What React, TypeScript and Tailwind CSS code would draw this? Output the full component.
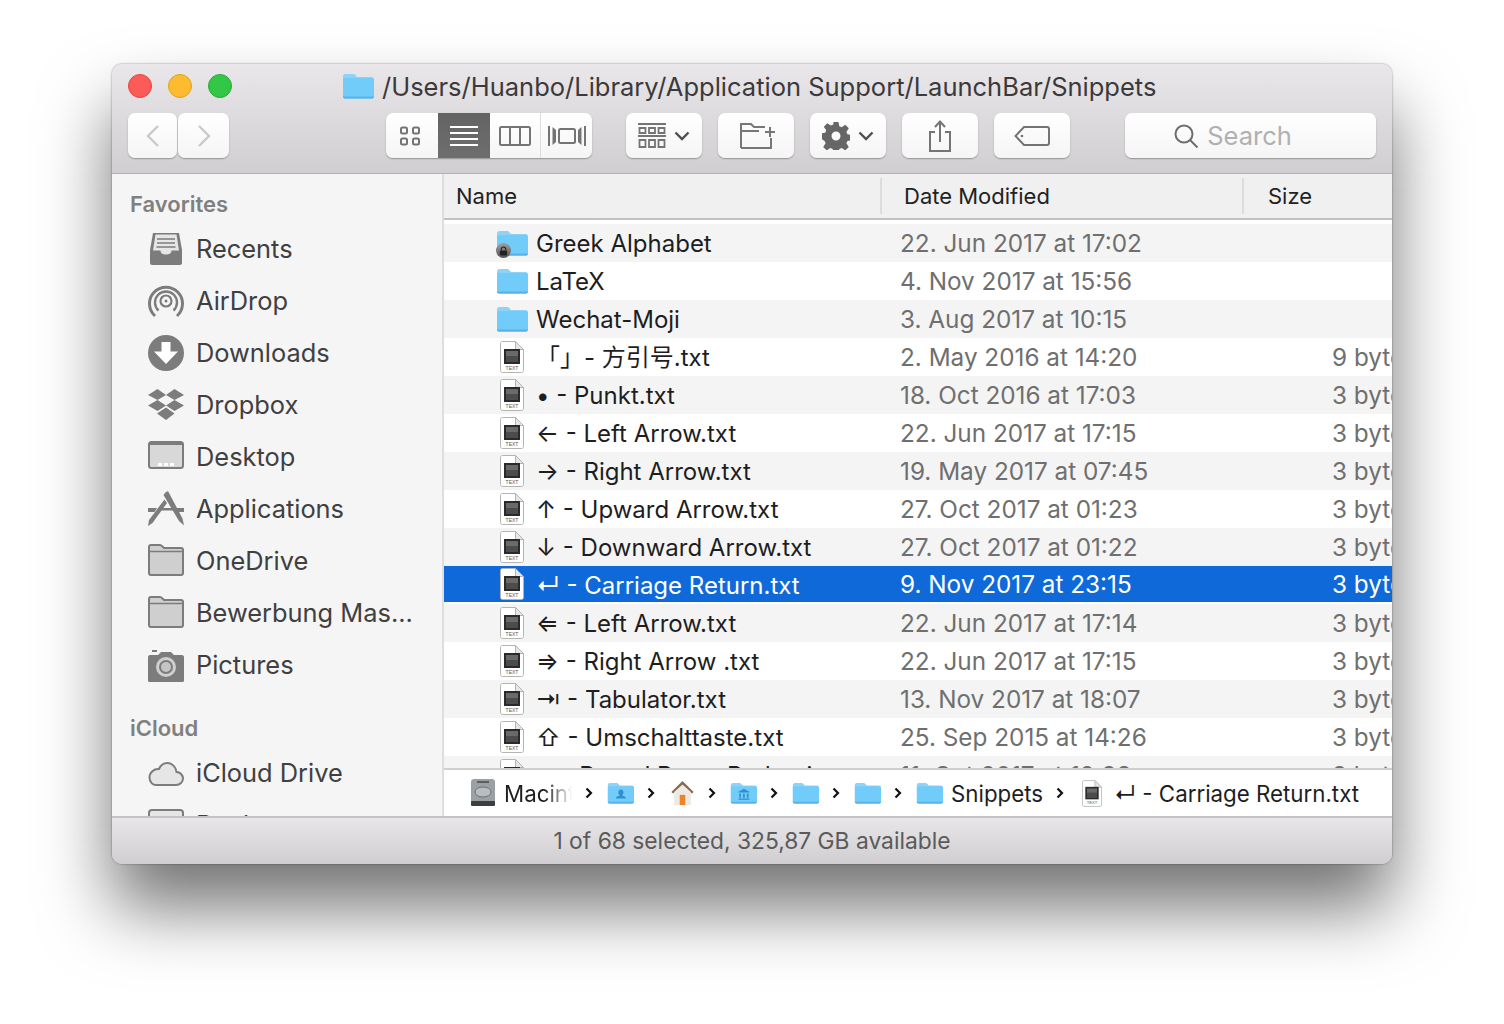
import React from 'react';

const FONT = "font-['Inter','Noto_Sans_CJK_SC',sans-serif]";

function Folder({ className = 'w-[32px] h-[26px]', glyph }: { className?: string; glyph?: 'user' | 'library' }) {
  return (
    <svg viewBox="0 0 32 26" className={className}>
      <path d="M1 3.500C1 2 2 1 3.500 1h7.500c1.200 0 1.800.5 2.600 1.400L15 4h14.500C31 4 32 5 32 6.500V23.500c0 1.200-1 2-2 2H3c-1.200 0-2-.8-2-2Z" fill="#90d2f6" />
      <path d="M1 6.500C1 5.500 2 5 3 5h26.500c1.300 0 2.500.8 2.500 2v16.500c0 1.200-1 2-2 2H3c-1.200 0-2-.8-2-2Z" fill="#72ccfa" />
      <path d="M1 23.500h31v.3c0 1-1 1.700-2 1.700H3c-1.200 0-2-.7-2-1.700Z" fill="#59b2e8" />
      {glyph === 'user' && <path d="M16.500 9a3 3 0 0 1 3 3.500c0 1.500-1 2.500-1.500 3.500 2 .8 4.500 1.500 4.500 3.500h-12c0-2 2.500-2.700 4.500-3.500-.5-1-1.500-2-1.500-3.500a3 3 0 0 1 3-3.500Z" fill="#2f8fcf" />}
      {glyph === 'library' && <path d="M16.500 8 23 11.500v1H10v-1ZM11 13.500h2v5h-2ZM15.500 13.500h2v5h-2ZM20 13.500h2v5h-2ZM10 19.500h13v1.500H10Z" fill="#2f8fcf" />}
    </svg>
  );
}

function DocIcon({ className = 'w-[24px] h-[32px]' }: { className?: string }) {
  return (
    <svg viewBox="0 0 24 32" className={className}>
      <path d="M.5 2.500C.5 1.400 1.400.5 2.500.5h13l8 8v21c0 1.100-.9 2-2 2h-19c-1.100 0-2-.9-2-2Z" fill="#fff" stroke="#b4b4b4" />
      <path d="M15.500.5v8h8Z" fill="#e6e6e6" stroke="#b4b4b4" strokeLinejoin="round" />
      <rect x="4" y="8" width="16" height="15" fill="#2a2a2a" />
      <rect x="6" y="10" width="12" height="11" fill="#6a6a6a" />
      <rect x="6" y="15" width="12" height="6" fill="#4c4c4c" />
      <text x="12" y="29" textAnchor="middle" fontSize="5" fontFamily="Liberation Sans" fill="#555">TEXT</text>
    </svg>
  );
}

function Chevron({ left }: { left?: boolean }) {
  return (
    <svg viewBox="0 0 16 24" className="w-[16px] h-[24px]">
      <path d={left ? 'M13 2 3 12l10 10' : 'M3 2l10 10L3 22'} fill="none" stroke="#c9c9c9" strokeWidth="2.400" />
    </svg>
  );
}

function PathChevron() {
  return (
    <svg viewBox="0 0 8 12" className="w-[8px] h-[12px] shrink-0 ml-[13px] mr-[14px]">
      <path d="M1.500 1.500 6 6l-4.500 4.500" fill="none" stroke="#111" strokeWidth="2.200" />
    </svg>
  );
}

function Btn({ className = 'w-[76px]', children }: { className?: string; children: React.ReactNode }) {
  return (
    <div className={`${className} h-[45px] flex items-center justify-center gap-[8px] rounded-[7px] bg-gradient-to-b from-white to-[#f5f5f5] shadow-[0_1px_1.500px_rgba(0,0,0,0.3)]`}>
      {children}
    </div>
  );
}

function ViewGroup() {
  return (
    <div className="flex w-[206px] h-[45px] rounded-[7px] overflow-hidden bg-gradient-to-b from-white to-[#f5f5f5] shadow-[0_1px_1.500px_rgba(0,0,0,0.3)]">
      <div className="w-[52px] flex items-center justify-center">
        <svg viewBox="0 0 22 20" className="w-[22px] h-[20px] -translate-x-[2px]" fill="none" stroke="#747474" strokeWidth="2">
          <rect x="2" y="1.500" width="6" height="6" rx="1.500" />
          <rect x="14" y="1.500" width="6" height="6" rx="1.500" />
          <rect x="2" y="12.500" width="6" height="6" rx="1.500" />
          <rect x="14" y="12.500" width="6" height="6" rx="1.500" />
        </svg>
      </div>
      <div className="w-[52px] flex items-center justify-center bg-gradient-to-b from-[#636363] to-[#6e6e6e]">
        <svg viewBox="0 0 28 20" className="w-[28px] h-[20px]" stroke="#fff" strokeWidth="2">
          <path d="M0 1h28M0 7h28M0 13h28M0 19h28" />
        </svg>
      </div>
      <div className="w-[51px] flex items-center justify-center border-r border-[#dcdcdc]">
        <svg viewBox="0 0 32 20" className="w-[32px] h-[20px]" fill="none" stroke="#747474" strokeWidth="2">
          <rect x="1" y="1" width="30" height="18" rx="1.500" />
          <path d="M11 1v18M21 1v18" />
        </svg>
      </div>
      <div className="flex-1 flex items-center justify-center">
        <svg viewBox="0 0 38 20" className="w-[38px] h-[20px]" fill="none" stroke="#747474" strokeWidth="2">
          <rect x="11" y="3" width="16" height="14" rx="1.500" />
          <path d="M1 0v20M37 0v20" />
          <path d="M4.500 1 8 4v12l-3.500 3ZM33.500 1 30 4v12l3.500 3Z" fill="#747474" stroke="none" />
        </svg>
      </div>
    </div>
  );
}

function Caret() {
  return (
    <svg viewBox="0 0 16 10" className="w-[16px] h-[10px]">
      <path d="M1.500 1.500 8 8l6.500-6.500" fill="none" stroke="#4f4f4f" strokeWidth="2.400" />
    </svg>
  );
}

function Toolbar() {
  return (
    <div className="flex items-center h-[45px] pl-[16px] mt-[5px]">
      <div className="flex w-[101px] gap-[1px]">
        <Btn className="w-[49px]"><Chevron left /></Btn>
        <Btn className="w-[51px]"><Chevron /></Btn>
      </div>
      <div className="ml-[157px]"><ViewGroup /></div>
      <div className="ml-[34px] flex gap-[16px]">
        <Btn>
          <svg viewBox="0 0 28 26" className="w-[28px] h-[26px]" fill="none" stroke="#747474" strokeWidth="1.800">
            <path d="M0 1h28M0 13h28" strokeWidth="2" />
            <path d="M1.500 5h6v5h-6zM11 5h6v5h-6zM20.500 5h6v5h-6zM1.500 17h6v7h-6zM11 17h6v7h-6zM20.500 17h6v7h-6z" />
          </svg>
          <Caret />
        </Btn>
        <Btn>
          <svg viewBox="0 0 36 26" className="w-[36px] h-[26px] ml-[4px]" fill="none" stroke="#777" strokeWidth="2">
            <path d="M1 25V1h10l3 3h11M1 8h18M31 15v10H1" />
            <path d="M25 9h10M30 4v10" />
          </svg>
        </Btn>
        <Btn>
          <svg viewBox="0 0 28 28" className="w-[28px] h-[28px]" fill="#666">
            <path fillRule="evenodd" d="M11.500 0h5l.8 4.200 2.400 1 3.600-2.400 3.500 3.500-2.400 3.600 1 2.400 4.200.8v5l-4.200.8-1 2.400 2.400 3.600-3.500 3.500-3.600-2.400-2.400 1-.8 4.200h-5l-.8-4.200-2.400-1-3.600 2.400-3.500-3.500 2.400-3.600-1-2.400L-1 16.500v-5l4.200-.8 1-2.400-2.400-3.600 3.500-3.500 3.600 2.400 2.400-1ZM14 9.500a4.500 4.500 0 1 0 0 9 4.500 4.500 0 0 0 0-9Z" />
          </svg>
          <Caret />
        </Btn>
        <Btn>
          <svg viewBox="0 0 24 32" className="w-[24px] h-[32px]" fill="none" stroke="#747474" strokeWidth="2">
            <path d="M7 12H2v19h20V12h-5" />
            <path d="M12 22V2M7 7l5-5.500L17 7" />
          </svg>
        </Btn>
        <Btn>
          <svg viewBox="0 0 36 20" className="w-[36px] h-[20px]" fill="none" stroke="#747474" strokeWidth="2">
            <path d="M10 1h23c1.100 0 2 .9 2 2v14c0 1.100-.9 2-2 2H10L1.500 10Z" />
            <circle cx="8" cy="10" r="1.300" fill="#747474" stroke="none" />
          </svg>
        </Btn>
      </div>
      <div className="ml-[55px]">
        <Btn className="w-[251px] pr-[36px]">
          <svg viewBox="0 0 26 26" className="w-[26px] h-[26px]" fill="none" stroke="#6c6c6c" strokeWidth="2">
            <circle cx="11" cy="11" r="8.500" />
            <path d="m17 17 7.500 7.500" />
          </svg>
          <span className="pt-[1px] text-[25.500px] text-[#b0b0b0]">Search</span>
        </Btn>
      </div>
    </div>
  );
}

function TitleBar() {
  return (
    <div className="h-[110px] shrink-0 bg-gradient-to-b from-[#e9e7e9] to-[#d0ced0] border-b border-[#b1b1b1]">
      <div className="flex items-center h-[44px] pl-[16px]">
        <div className="flex gap-[16px]">
          <div className="w-[24px] h-[24px] rounded-full bg-[#fc5b57] border border-[#e2463f]" />
          <div className="w-[24px] h-[24px] rounded-full bg-[#fdbc2f] border border-[#e1a116]" />
          <div className="w-[24px] h-[24px] rounded-full bg-[#33c748] border border-[#27aa35]" />
        </div>
        <div className="ml-[110px] flex items-center gap-[8px]">
          <Folder />
          <span className="pt-[2px] text-[25.500px] text-[#3b393b] whitespace-nowrap">/Users/Huanbo/Library/Application Support/LaunchBar/Snippets</span>
        </div>
      </div>
      <Toolbar />
    </div>
  );
}

const ICON_STROKE = '#7c7c7c';

function SideIcon({ name }: { name: string }) {
  const cls = 'w-[36px] h-[36px] shrink-0';
  switch (name) {
    case 'Recents':
      return (
        <svg viewBox="0 0 36 36" className={cls}>
          <path d="M5 2h26l3 17v13c0 1-1 2-2 2H4c-1 0-2-1-2-2V19Z" fill={ICON_STROKE} />
          <path d="M7.500 3.500h21l2.500 16h-7.500c0 3-2.500 4-5.500 4s-5.500-1-5.500-4H5Z" fill="#e6e6e6" />
          <path d="M9 8h18M9 12h18M8.500 16h19" stroke={ICON_STROKE} strokeWidth="1.600" />
        </svg>
      );
    case 'AirDrop':
      return (
        <svg viewBox="0 0 36 36" className={cls} fill="none" stroke={ICON_STROKE} strokeWidth="3">
          <path d="M7 33a16.500 16.500 0 1 1 22 0" />
          <path d="M10.500 27.500a11 11 0 1 1 15 0" strokeWidth="2.400" />
          <circle cx="18" cy="18" r="5.500" strokeWidth="2.200" />
          <circle cx="18" cy="18" r="1.500" fill={ICON_STROKE} stroke="none" />
        </svg>
      );
    case 'Downloads':
      return (
        <svg viewBox="0 0 36 36" className={cls}>
          <circle cx="18" cy="18" r="18" fill={ICON_STROKE} />
          <path d="M13.500 7h9v9.500H30L18 29 6 16.500h7.500Z" fill="#fff" />
        </svg>
      );
    case 'Dropbox':
      return (
        <svg viewBox="0 0 36 36" className={cls} fill={ICON_STROKE}>
          <path d="M9.500 2 18 8 9.500 13 0 8ZM26.500 2 36 8l-9.500 5L18 8ZM9.500 13 18 18.500 9.500 24 0 18.500ZM26.500 13 36 18.500 26.500 24 18 18.500ZM18 20.500l8.500 6L18 33l-9-6.500Z" />
        </svg>
      );
    case 'Desktop':
      return (
        <svg viewBox="0 0 36 36" className={cls}>
          <rect x="1" y="3" width="34" height="26" rx="2.500" fill="#d8d8d8" stroke={ICON_STROKE} strokeWidth="2" />
          <rect x="1" y="3" width="34" height="3" rx="1.500" fill={ICON_STROKE} />
          <path d="M10 24h4v3h-4zM16 24h4v3h-4zM22 24h4v3h-4z" fill="#fff" />
        </svg>
      );
    case 'Applications':
      return (
        <svg viewBox="0 0 36 36" className={cls} fill={ICON_STROKE}>
          <path d="M0 17h9l-2.500 4H0ZM27 17h9v4h-6.500ZM11.500 17h13l1.500 2.500H10Z" />
          <path d="M17.500 1.500 20 0l14.500 27.500 1.500 7-5-4.500L15.500 4Z" />
          <path d="M16.500 8.500 19 12 4.500 32l-4.500 3L1 29Z" />
        </svg>
      );
    case 'Pictures':
      return (
        <svg viewBox="0 0 36 36" className={cls}>
          <path d="M2 8h8l3-3h10l3 3h8c1 0 2 1 2 2v24c0 .5-1 1-2 1H2c-1 0-2-.5-2-1V10c0-1 1-2 2-2Z" fill={ICON_STROKE} />
          <path d="M4 3h5v2H4Z" fill={ICON_STROKE} />
          <circle cx="18" cy="20" r="10" fill="#cfcfcf" />
          <circle cx="18" cy="20" r="7" fill={ICON_STROKE} />
          <circle cx="18" cy="20" r="5" fill="#c4c4c4" />
        </svg>
      );
    case 'iCloud Drive':
      return (
        <svg viewBox="0 0 36 36" className={cls}>
          <path d="M8 30h20c4 0 7-3 7-6.500S32 17 28.500 17c-.5-5-4.500-9-9-9-4 0-7 2.500-8.500 6-5-.5-9.500 3.500-9.500 8.500S5 30 8 30Z" fill="#e6e6e6" stroke={ICON_STROKE} strokeWidth="2" />
        </svg>
      );
    case 'Books':
      return (
        <svg viewBox="0 0 36 36" className={cls}>
          <rect x="1" y="3" width="34" height="30" rx="3" fill="#e6e6e6" stroke={ICON_STROKE} strokeWidth="2" />
        </svg>
      );
    default:
      return (
        <svg viewBox="0 0 36 36" className={cls}>
          <path d="M1 30V4c0-1 .5-2 2-2h9c1 0 1.500.5 2.500 1.500L16 5h17c1.500 0 2 1 2 2v23c0 1-.7 2-2 2H3c-1.300 0-2-1-2-2Z" fill="#cfcfcf" stroke={ICON_STROKE} strokeWidth="2" />
          <path d="M1 8.500h34" stroke={ICON_STROKE} strokeWidth="1.500" />
        </svg>
      );
  }
}

const FAVORITES = ['Recents', 'AirDrop', 'Downloads', 'Dropbox', 'Desktop', 'Applications', 'OneDrive', 'Bewerbung Mas...', 'Pictures'];

function SideItem({ name }: { name: string }) {
  return (
    <div className="flex items-center h-[52px] pl-[36px] gap-[12px]">
      <SideIcon name={name} />
      <span className="text-[25.400px] text-[#404040] whitespace-nowrap">{name}</span>
    </div>
  );
}

function Sidebar() {
  return (
    <div className="w-[332px] shrink-0 bg-[#f5f5f5] border-r-[2px] border-[#dedede] pt-[15px] overflow-hidden">
      <div className="pl-[18px] h-[30px] flex items-center text-[22px] font-semibold text-[#808080]">Favorites</div>
      <div className="mt-[4px]">
        {FAVORITES.map((f) => <SideItem key={f} name={f} />)}
      </div>
      <div className="pl-[18px] mt-[22px] h-[30px] flex items-center text-[22px] font-semibold text-[#808080]">iCloud</div>
      <div className="mt-[4px]">
        <SideItem name="iCloud Drive" />
        <SideItem name="Books" />
      </div>
    </div>
  );
}

type FileRow = { name: string; date: string; size?: string; folder?: boolean; lock?: boolean; selected?: boolean };

const FILES: FileRow[] = [
  { name: 'Greek Alphabet', date: '22. Jun 2017 at 17:02', folder: true, lock: true },
  { name: 'LaTeX', date: '4. Nov 2017 at 15:56', folder: true },
  { name: 'Wechat-Moji', date: '3. Aug 2017 at 10:15', folder: true },
  { name: '「」- 方引号.txt', date: '2. May 2016 at 14:20', size: '9 bytes' },
  { name: '• - Punkt.txt', date: '18. Oct 2016 at 17:03', size: '3 bytes' },
  { name: '← - Left Arrow.txt', date: '22. Jun 2017 at 17:15', size: '3 bytes' },
  { name: '→ - Right Arrow.txt', date: '19. May 2017 at 07:45', size: '3 bytes' },
  { name: '↑ - Upward Arrow.txt', date: '27. Oct 2017 at 01:23', size: '3 bytes' },
  { name: '↓ - Downward Arrow.txt', date: '27. Oct 2017 at 01:22', size: '3 bytes' },
  { name: '↵ - Carriage Return.txt', date: '9. Nov 2017 at 23:15', size: '3 bytes', selected: true },
  { name: '⇐ - Left Arrow.txt', date: '22. Jun 2017 at 17:14', size: '3 bytes' },
  { name: '⇒ - Right Arrow .txt', date: '22. Jun 2017 at 17:15', size: '3 bytes' },
  { name: '⇥ - Tabulator.txt', date: '13. Nov 2017 at 18:07', size: '3 bytes' },
  { name: '⇧ - Umschalttaste.txt', date: '25. Sep 2015 at 14:26', size: '3 bytes' },
  { name: '↘ - Paced Paste Reduction.txt', date: '11. Oct 2017 at 12:38', size: '3 bytes' },
];

function Row({ file, index }: { file: FileRow; index: number }) {
  const bg = file.selected ? 'bg-[#1069d8] border-b-[2px] border-white' : index % 2 === 0 ? 'bg-[#f4f4f4]' : 'bg-white';
  return (
    <div className={`flex items-center h-[38px] shrink-0 whitespace-nowrap ${bg}`}>
      <div className="w-[456px] shrink-0 flex items-center pl-[52px]">
        <div className="w-[32px] flex justify-center relative shrink-0">
          {file.folder ? <Folder /> : <DocIcon />}
          {file.lock && (
            <div className="absolute left-[0px] bottom-[-2px] w-[15px] h-[15px] rounded-full bg-gradient-to-b from-[#a0a0a0] to-[#555] flex items-center justify-center">
              <svg viewBox="0 0 10 11" className="w-[9px] h-[10px]">
                <path d="M2.500 5V3.500a2.500 2.500 0 0 1 5 0V5" fill="none" stroke="#222" strokeWidth="1.200" />
                <rect x="1" y="5" width="8" height="5.500" rx="1" fill="#222" />
              </svg>
            </div>
          )}
        </div>
        <span className={`ml-[8px] pt-[2px] text-[24px] ${file.selected ? 'text-white pt-[3px]' : 'text-[#1e1e1e]'}`}>{file.name}</span>
      </div>
      <div className={`w-[432px] shrink-0 pt-[1px] text-[24.300px] ${file.selected ? 'text-white' : 'text-[#6f6f6f]'}`}>{file.date}</div>
      <div className={`pt-[1px] text-[24.300px] ${file.selected ? 'text-white' : 'text-[#6f6f6f]'}`}>{file.size}</div>
    </div>
  );
}

function ColumnHeader() {
  return (
    <div className="flex h-[46px] shrink-0 items-center bg-[#f0f0f0] border-b-[2px] border-[#c2c2c2] text-[22px] text-[#222]">
      <div className="w-[436px] pl-[12px]">Name</div>
      <div className="w-[362px] pl-[22px] border-l-[2px] border-[#dcdcdc] h-[36px] flex items-center">Date Modified</div>
      <div className="flex-1 pl-[24px] border-l-[2px] border-[#dcdcdc] h-[36px] flex items-center">Size</div>
    </div>
  );
}

function PathBar() {
  return (
    <div className="flex items-center h-[48px] shrink-0 pl-[26px] bg-white border-t-[2px] border-[#cfcfcf] text-[22.300px] text-[#1e1e1e] whitespace-nowrap">
      <svg viewBox="0 0 26 30" className="w-[26px] h-[30px] shrink-0">
        <rect x="1" y="1" width="24" height="27" rx="3" fill="#9aa0a3" />
        <rect x="1" y="23" width="24" height="5" rx="1" fill="#3c3f40" />
        <ellipse cx="13" cy="14" rx="8" ry="5" fill="#b9bdbf" stroke="#6d7173" />
        <path d="M7 4h12" stroke="#45484a" strokeWidth="1.500" />
      </svg>
      <span className="ml-[8px] pt-[2px] w-[68px] overflow-hidden text-transparent bg-clip-text bg-gradient-to-r from-[#1e1e1e] from-60% to-transparent">Macintosh</span>
      <PathChevron />
      <Folder className="w-[27px] h-[24px] shrink-0" glyph="user" />
      <PathChevron />
      <svg viewBox="0 0 26 28" className="ml-[1px] w-[25px] h-[26px] shrink-0">
        <path d="M13 1 1 13l2 1.500L13 5l10 9.500 2-1.500Z" fill="#8a6a4f" />
        <path d="M4 13 13 5l9 8v14H4Z" fill="#eee9e2" />
        <path d="M10 16h6v11h-6Z" fill="#e8862c" />
      </svg>
      <PathChevron />
      <Folder className="w-[27px] h-[24px] shrink-0" glyph="library" />
      <PathChevron />
      <Folder className="w-[27px] h-[24px] shrink-0" />
      <PathChevron />
      <Folder className="w-[27px] h-[24px] shrink-0" />
      <PathChevron />
      <Folder className="w-[27px] h-[24px] shrink-0" />
      <span className="ml-[8px] pt-[2px]">Snippets</span>
      <PathChevron />
      <DocIcon className="ml-[4px] w-[20px] h-[27px] shrink-0" />
      <span className="ml-[12px] pt-[2px]">↵ - Carriage Return.txt</span>
    </div>
  );
}

function FileList() {
  return (
    <div className="flex-1 min-w-0 flex flex-col overflow-hidden bg-white">
      <ColumnHeader />
      <div className="h-[4px] shrink-0 bg-white" />
      <div className="h-[544px] shrink-0 overflow-hidden flex flex-col">
        {FILES.map((f, i) => <Row key={f.date + f.name} file={f} index={i} />)}
      </div>
      <PathBar />
    </div>
  );
}

export default function App() {
  return (
    <div className={`w-[1504px] h-[1024px] overflow-hidden bg-white pt-[64px] pl-[112px] ${FONT}`}>
      <div className="w-[1280px] h-[800px] flex flex-col rounded-[10px] overflow-hidden shadow-[0_44px_70px_rgba(0,0,0,0.55),0_0_2px_rgba(0,0,0,0.5)]">
        <TitleBar />
        <div className="flex flex-1 min-h-0">
          <Sidebar />
          <FileList />
        </div>
        <div className="h-[48px] shrink-0 flex items-center justify-center bg-gradient-to-b from-[#e8e6e8] to-[#d0ced0] border-t-[2px] border-[#c4c4c4] text-[22.800px] text-[#5a5a5a]">
          1 of 68 selected, 325,87 GB available
        </div>
      </div>
    </div>
  );
}
